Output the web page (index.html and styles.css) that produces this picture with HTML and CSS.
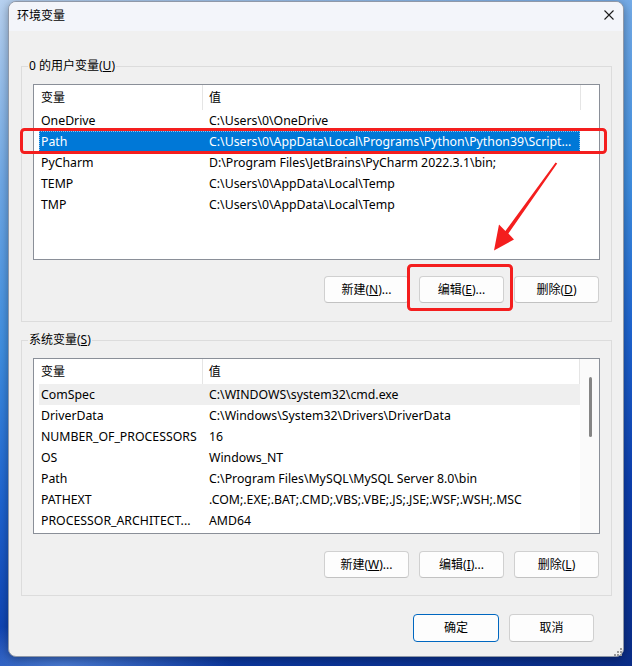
FILE: index.html
```html
<!DOCTYPE html>
<html lang="zh-CN">
<head>
<meta charset="utf-8">
<title>环境变量</title>
<link rel="stylesheet" href="styles.css">
</head>
<body>
<div class="desktop">
  <div class="window">
    <div class="titlebar">
      <span class="title">环境变量</span>
      <svg class="close" width="10" height="10" viewBox="0 0 10 10" aria-label="关闭"><path d="M0.5 0.5L9.5 9.5M9.5 0.5L0.5 9.5" stroke="#1b1b1b" stroke-width="1.1" fill="none"/></svg>
    </div>
    <div class="content">
      <fieldset class="group group-user">
        <legend>0 的用户变量(<u>U</u>)</legend>
        <div class="group-body">
          <div class="list">
            <div class="list-main">
              <div class="list-head">
                <div class="hcell hname">变量</div>
                <div class="hcell hvalue">值</div>
              </div>
              <div class="row"><span class="c-name">OneDrive</span><span class="c-value">C:\Users\0\OneDrive</span></div>
              <div class="row selected"><span class="c-name">Path</span><span class="c-value">C:\Users\0\AppData\Local\Programs\Python\Python39\Script...</span></div>
              <div class="row"><span class="c-name">PyCharm</span><span class="c-value">D:\Program Files\JetBrains\PyCharm 2022.3.1\bin;</span></div>
              <div class="row"><span class="c-name">TEMP</span><span class="c-value">C:\Users\0\AppData\Local\Temp</span></div>
              <div class="row"><span class="c-name">TMP</span><span class="c-value">C:\Users\0\AppData\Local\Temp</span></div>
            </div>
          </div>
          <div class="btn-row">
            <button class="btn">新建(<u>N</u>)...</button>
            <button class="btn">编辑(<u>E</u>)...</button>
            <button class="btn">删除(<u>D</u>)</button>
          </div>
        </div>
      </fieldset>

      <fieldset class="group group-system">
        <legend>系统变量(<u>S</u>)</legend>
        <div class="group-body">
          <div class="list">
            <div class="list-main list-main-scroll">
              <div class="list-head">
                <div class="hcell hname">变量</div>
                <div class="hcell hvalue">值</div>
              </div>
              <div class="row hover"><span class="c-name">ComSpec</span><span class="c-value">C:\WINDOWS\system32\cmd.exe</span></div>
              <div class="row"><span class="c-name">DriverData</span><span class="c-value">C:\Windows\System32\Drivers\DriverData</span></div>
              <div class="row"><span class="c-name">NUMBER_OF_PROCESSORS</span><span class="c-value">16</span></div>
              <div class="row"><span class="c-name">OS</span><span class="c-value">Windows_NT</span></div>
              <div class="row"><span class="c-name">Path</span><span class="c-value">C:\Program Files\MySQL\MySQL Server 8.0\bin</span></div>
              <div class="row"><span class="c-name">PATHEXT</span><span class="c-value">.COM;.EXE;.BAT;.CMD;.VBS;.VBE;.JS;.JSE;.WSF;.WSH;.MSC</span></div>
              <div class="row"><span class="c-name">PROCESSOR_ARCHITECT...</span><span class="c-value">AMD64</span></div>
            </div>
            <div class="scrollbar"><div class="thumb"></div></div>
          </div>
          <div class="btn-row">
            <button class="btn">新建(<u>W</u>)...</button>
            <button class="btn">编辑(<u>I</u>)...</button>
            <button class="btn">删除(<u>L</u>)</button>
          </div>
        </div>
      </fieldset>

      <div class="dialog-buttons">
        <button class="btn btn-dlg primary">确定</button>
        <button class="btn btn-dlg">取消</button>
      </div>
    </div>
  </div>

  <svg class="overlay" width="632" height="666" viewBox="0 0 632 666">
    <rect x="21.5" y="129.5" width="584" height="23" rx="3" fill="none" stroke="#f41e1e" stroke-width="3"/>
    <rect x="408.5" y="265.5" width="103" height="44" rx="3" fill="none" stroke="#f41e1e" stroke-width="3"/>
    <path d="M555.6 162.4 L557.2 163.6 L508.4 233.4 L514 239.5 L494 250.5 L499 224.5 L505.4 231 Z" fill="#f41e1e"/>
    <g fill="#9a9a9a">
      <rect x="620" y="648" width="2" height="2"/>
      <rect x="617" y="651" width="2" height="2"/>
      <rect x="620" y="651" width="2" height="2"/>
      <rect x="614" y="654" width="2" height="2"/>
      <rect x="617" y="654" width="2" height="2"/>
      <rect x="620" y="654" width="2" height="2"/>
    </g>
  </svg>
</div>
</body>
</html>
```

FILE: styles.css
```css
* { box-sizing: border-box; }

html, body {
  margin: 0;
  padding: 0;
}

body {
  font-family: "Noto Sans", "Noto Sans CJK SC", sans-serif;
  font-size: 12px;
  color: #000;
}

.desktop {
  position: relative;
  width: 632px;
  height: 666px;
  padding: 1px 0 0 8px;
  overflow: hidden;
  background:
    radial-gradient(ellipse 240px 60px at 10% 100%, rgba(120, 170, 240, 0.55), transparent 70%),
    linear-gradient(165deg, #b7d1f0 0%, #6fa8e6 22%, #3f8ee0 42%, #1e64d0 60%, #0d3fae 78%, #0a2c86 100%);
}

.window {
  width: 616px;
  height: 656px;
  border: 1px solid #8f98a8;
  border-radius: 8px;
  background: #f0f0f0;
  box-shadow: 0 2px 10px rgba(0, 0, 0, 0.35);
  display: flex;
  flex-direction: column;
}

.titlebar {
  height: 29px;
  flex: none;
  display: flex;
  align-items: center;
  justify-content: space-between;
  padding: 0 9px 0 8px;
  background: #f3f5fa;
  border-radius: 7px 7px 0 0;
}

.title {
  font-size: 12px;
  line-height: 16px;
  margin-top: -2px;
}

.close {
  display: block;
  margin-top: -3px;
}

.content {
  flex: 1;
  padding: 0 11px 0 12px;
}

.group {
  margin: 0;
  padding: 10px 0 18px;
  border: 1px solid #dcdcdc;
  min-width: 0;
  width: 591px;
}

.group-user {
  margin-top: 27px;
}

.group-system {
  margin-top: 10px;
  padding-bottom: 17px;
}

.group legend {
  margin-left: 6px;
  padding: 0 1px;
  line-height: 16px;
  font-size: 12px;
}

.group-body {
  padding: 0 11px;
}

.list {
  height: 176px;
  border: 1px solid #8a8f98;
  background: #fff;
  display: flex;
}

.list-main {
  flex: 1;
  min-width: 0;
}

.list-main-scroll {
  flex: none;
  width: 546px;
}

.list-head {
  display: flex;
  height: 25px;
}

.hcell {
  height: 25px;
  line-height: 25px;
  padding-left: 7px;
  border-right: 1px solid #e5e5e5;
}

.hname {
  width: 169px;
}

.hvalue {
  width: 378px;
  padding-left: 6px;
}

.row {
  display: flex;
  width: 541px;
  height: 21px;
  line-height: 21px;
  margin-left: 5px;
  white-space: nowrap;
  font-size: 12.3px;
}

.c-name {
  width: 163px;
  flex: none;
  padding-left: 2px;
  overflow: hidden;
}

.c-value {
  flex: 1;
  min-width: 0;
  padding-left: 7px;
  overflow: hidden;
}

.row.selected {
  background: #0078d7;
  color: #fff;
  outline: 1px dotted #8cc4f2;
  outline-offset: -1px;
}

.row.hover {
  background: #efefef;
}

.scrollbar {
  width: 19px;
  flex: none;
  background: #fafafa;
}

.thumb {
  width: 3px;
  height: 60px;
  margin: 18px 0 0 9px;
  border-radius: 2px;
  background: #858585;
}

.btn-row {
  display: flex;
  justify-content: flex-end;
  gap: 10px;
  margin-top: 16px;
  padding-right: 1px;
}

.group-system .btn-row {
  margin-top: 17px;
}

.btn {
  width: 85px;
  height: 27px;
  padding: 0;
  border: 1px solid #d0d0d0;
  border-bottom-color: #c2c2c2;
  border-radius: 4px;
  background: #fdfdfd;
  font-family: "Noto Sans", "Noto Sans CJK SC", sans-serif;
  font-size: 12px;
  line-height: 25px;
  color: #000;
  text-align: center;
}

.dialog-buttons {
  display: flex;
  justify-content: flex-end;
  gap: 10px;
  margin-top: 18px;
  padding-right: 18px;
}

.btn-dlg {
  height: 28px;
  line-height: 26px;
}

.btn.primary {
  width: 86px;
  border-color: #0067c0;
}

.overlay {
  position: absolute;
  left: 0;
  top: 0;
  pointer-events: none;
}
```
